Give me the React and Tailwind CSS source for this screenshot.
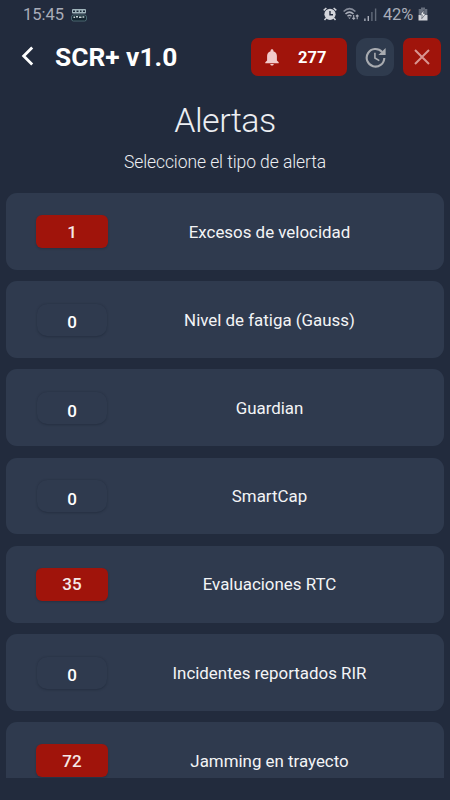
import React from 'react';

const alerts = [
  { count: 1, label: 'Excesos de velocidad' },
  { count: 0, label: 'Nivel de fatiga (Gauss)' },
  { count: 0, label: 'Guardian' },
  { count: 0, label: 'SmartCap' },
  { count: 35, label: 'Evaluaciones RTC' },
  { count: 0, label: 'Incidentes reportados RIR' },
  { count: 72, label: 'Jamming en trayecto' },
];

const StatusBar = () => (
  <div className="flex h-7 shrink-0 items-center justify-between pl-[23px] pr-[22px] text-[#a9adb9]">
    <div className="flex items-center gap-[7px]">
      <span className="w-[41px] whitespace-nowrap pt-px text-[16.5px] leading-7">15:45</span>
      {/* App notification */}
      <svg className="mt-px" width="16" height="14" viewBox="0 0 16 14">
        <rect x="1" y="1" width="14" height="4.6" rx="1" fill="#9fb4bb" />
        <path d="M2 3.2h2M5.5 3.2h2M9 3.2h1.5M12 3.2h2" stroke="#172435" strokeWidth="1.5" />
        <rect x="0.5" y="7" width="15" height="6" rx="2" fill="#142530" stroke="#56777f" strokeWidth="0.8" />
        <path d="M2.5 9.2h1.6M5 8.8h2M8 9.2h2.5M11.5 9h1.8" stroke="#c5d2d5" strokeWidth="1.5" />
      </svg>
    </div>
    <div className="flex items-center">
      <svg width="14" height="14" viewBox="0 0 14 14" fill="none" stroke="#d2d4da">
        <path d="M0.7 3.4L3.4 1M13.3 3.4L10.6 1M3 11.3L1.5 13M11 11.3L12.5 13" strokeWidth="1.5" />
        <circle cx="7" cy="7.3" r="5.6" fill="#d2d4da" stroke="none" />
        <path d="M7 4v3.7h3" stroke="#222b3d" strokeWidth="1.4" />
      </svg>
      <svg className="ml-[6px]" width="17" height="14" viewBox="0 0 17 14" fill="none" stroke="#a9adb9" strokeWidth="1.5">
        <path d="M0.6 4.5Q6.5 -1.2 12.4 4.5" stroke="#858b99" />
        <path d="M2.5 7Q6.5 3.2 10.5 7M4.5 9.2Q6.5 7.4 8.5 9.2" />
        <path d="M5.2 10.6h2.6L6.5 12z" fill="#a9adb9" stroke="none" />
        <path d="M10.7 8v4M9.3 10.8l1.4 1.4 1.4-1.4M14.2 12.2V8M12.8 9.4L14.2 8l1.4 1.4" strokeWidth="1.1" />
      </svg>
      <svg className="ml-[4px]" width="13" height="13" viewBox="0 0 13 13">
        <path d="M0.2 10.5h1.4V13H0.2zM3.6 8H5v5H3.6z" fill="#a9adb9" />
        <path d="M7.2 4h1.4v9H7.2zM10.9 0.5h1.4V13h-1.4z" fill="#636b7b" />
      </svg>
      <span className="ml-[6px] w-[30px] whitespace-nowrap pt-px text-[16.5px] leading-7 tracking-[-0.2px]">42%</span>
      <svg className="ml-[5px]" width="10" height="14" viewBox="0 0 10 14">
        <path d="M3 0.5h4V2h2.3v6H0.7V2H3z" fill="#656d7c" />
        <path d="M0.5 8h9v5.5h-9z" fill="#d2d4da" />
        <path d="M6 2.8L2.2 7.8h2.1L3.8 11.6l4-5H5.5z" fill="#eceef0" stroke="#222b3d" strokeWidth="0.5" />
      </svg>
    </div>
  </div>
);

const Header = () => (
  <header className="mt-[10px] flex h-[38px] shrink-0 items-center pl-[21px] pr-[9px]">
    <svg className="mb-[3px]" width="13" height="20" viewBox="0 0 13 20" fill="none" stroke="#fff" strokeWidth="2.8">
      <path d="M11.2 1.5L2.7 10l8.5 8.5" />
    </svg>
    <h1 className="ml-[21px] pt-px text-[26.3px] font-bold leading-none text-white">SCR+ v1.0</h1>
    <div className="ml-auto flex gap-[9px]">
      <button className="flex h-[38px] w-[96px] items-center rounded-[7px] bg-[#a0140b] pl-[14px] text-white">
        <svg width="14" height="17" viewBox="0 0 14 17" fill="#f1caca">
          <path d="M7 0.3c-.9 0-1.4.6-1.4 1.3v.6C3.3 2.8 2.1 4.8 2.1 7.1v4.3L0.3 13.2v1h13.4v-1l-1.8-1.8V7.1c0-2.3-1.2-4.3-3.5-4.9v-.6C8.4.9 7.9.3 7 .3zM5.3 15c0 .9.8 1.6 1.7 1.6s1.7-.7 1.7-1.6z" />
        </svg>
        <span className="ml-[19px] pt-[2px] text-[16.5px] font-bold">277</span>
      </button>
      <button className="flex size-[38px] items-center justify-center rounded-[11px] bg-[#2f3b4e]">
        <svg width="21" height="21" viewBox="0 0 21 21" fill="none" stroke="#a8abb0" strokeWidth="2.1">
          <path d="M17 4.9A8.8 8.8 0 1 0 19.3 11" />
          <path d="M20.6 0.9v7.2h-7.2z" fill="#a8abb0" stroke="none" />
          <path d="M9.9 5.8v5.2l4.4 2.6" strokeWidth="1.6" />
        </svg>
      </button>
      <button className="flex size-[38px] items-center justify-center rounded-[7px] bg-[#a0140b]">
        <svg width="16" height="16" viewBox="0 0 16 16" fill="none" stroke="#d99591" strokeWidth="2">
          <path d="M1 1l14 14M15 1L1 15" />
        </svg>
      </button>
    </div>
  </header>
);

const CountBadge = ({ count }) =>
  count > 0 ? (
    <div className="flex h-[33px] w-[72px] items-center justify-center rounded-[6px] bg-[#a0140b] pt-[2px] text-[17px] font-medium text-[#f6e9e8] shadow-[0_1px_2px_rgba(20,30,45,0.3)]">
      {count}
    </div>
  ) : (
    <div className="mx-px mt-px flex h-8 w-[70px] items-center justify-center rounded-[10px] bg-[#2f3a4e] pt-[6px] text-[17px] font-medium text-white shadow-[0_0.5px_2px_rgba(20,29,44,0.35)]">
      {count}
    </div>
  );

const AlertCard = ({ count, label }) => (
  <div className="flex h-[76.8px] shrink-0 items-center rounded-[11px] bg-[#2f3a4e] pl-[30px] pr-[13px]">
    <CountBadge count={count} />
    <span className="flex-1 pt-[2px] text-center text-[16.9px] text-[#f3f4f6]">{label}</span>
  </div>
);

const App = () => {
  return (
    <div className="flex h-[800px] w-[450px] flex-col overflow-hidden bg-[#222b3d] font-['Roboto',sans-serif]">
      <StatusBar />
      <Header />

      {/* Title */}
      <div className="mt-[22px] h-[95px] shrink-0 text-center text-[#eceef2]">
        <h2 className="text-[34px] font-light leading-[44px] tracking-[-0.5px]">Alertas</h2>
        <p className="mt-[8px] text-[17.5px] font-[330] leading-6 tracking-[-0.08px]">Seleccione el tipo de alerta</p>
      </div>

      {/* Alert list */}
      <div className="flex h-[585px] shrink-0 flex-col gap-[11.4px] overflow-hidden px-[6px]">
        {alerts.map((item) => (
          <AlertCard key={item.label} count={item.count} label={item.label} />
        ))}
      </div>
    </div>
  );
};

export default App;
